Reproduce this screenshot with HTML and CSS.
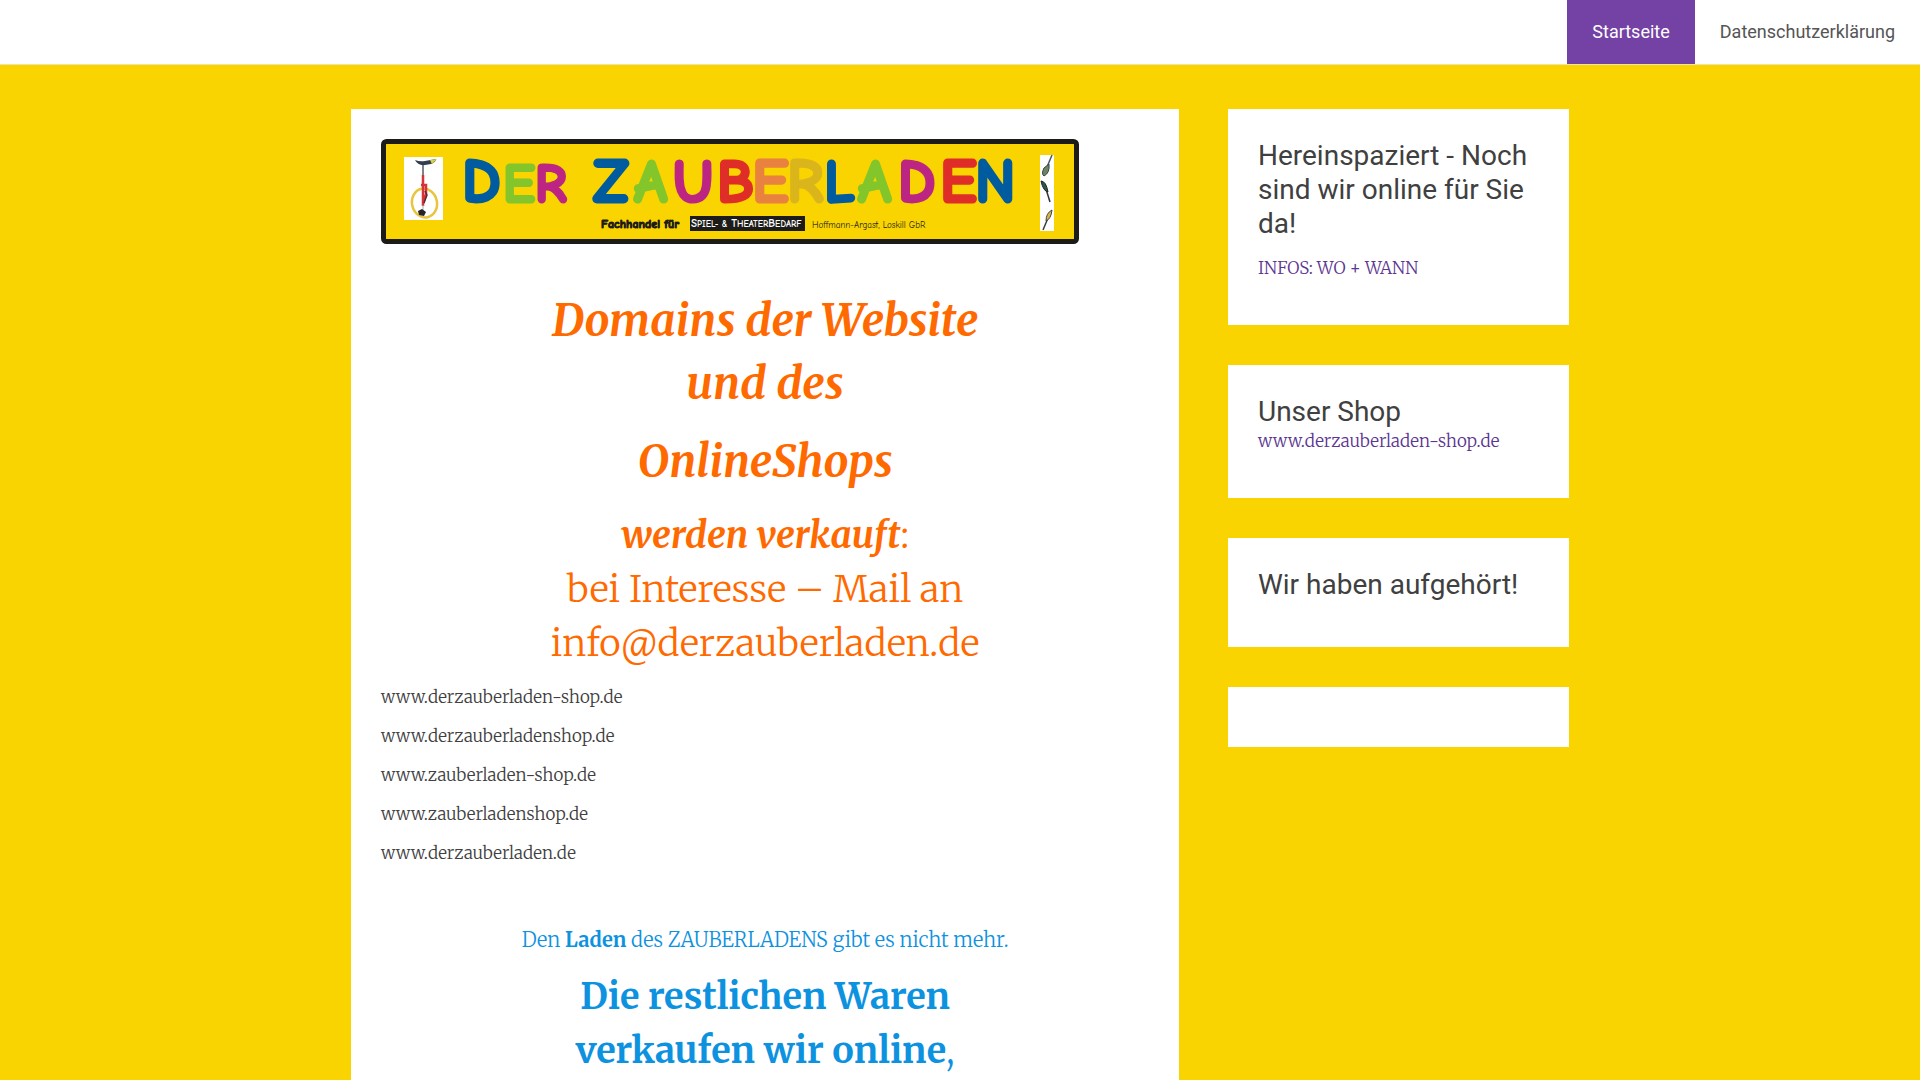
FILE: index.html
```html
<!DOCTYPE html>
<html lang="de">
<head>
    <meta charset="UTF-8">
    <meta name="viewport" content="width=device-width, initial-scale=1.0">
    <title>Der Zauberladen</title>
    <link rel="stylesheet" href="styles.css">
</head>
<body>

<header class="site-header">
    <nav class="main-nav">
        <a href="#" class="nav-link active">Startseite</a>
        <a href="#" class="nav-link">Datenschutzerklärung</a>
    </nav>
</header>

<div class="container">
    <main class="content">
        <svg class="banner" viewBox="0 0 698 105" role="img" aria-label="Der Zauberladen">
            <rect x="2.500" y="2.500" width="693" height="100" rx="3" fill="#fad400" stroke="#1d1b18" stroke-width="5"/>
            <!-- Einrad -->
            <rect x="23" y="18" width="39" height="63" fill="#fff"/>
            <ellipse cx="43.500" cy="64" rx="12.500" ry="14.500" fill="none" stroke="#e8c53a" stroke-width="2.500" transform="rotate(-12 43.500 64)"/>
            <path d="M34 21q5 2 10 1l11-2q0 3-5 5l-6 1q-7 1-10-5z" fill="#353c4c"/>
            <path d="M49 21l7-1-5 5z" fill="#d8d04a"/>
            <path d="M42 26v14" stroke="#555b66" stroke-width="1.500"/>
            <path d="M42 36v31M40 46h5v9l-3 10" fill="none" stroke="#d6323a" stroke-width="2.500"/>
            <path d="M44 52l2 4-3 8" fill="none" stroke="#5a2b35" stroke-width="1.500"/>
            <path d="M42 66v9" stroke="#a8b0b8" stroke-width="1"/>
            <path d="M37 72l4-2 4 3-2 4-5-1z" fill="#23252b"/>
            <!-- Schriftzug -->
            <g class="banner-title">
                <text class="letter-big"><tspan class="blue" x="81" y="63">D</tspan></text>
                <text class="letter-small"><tspan class="green" x="122" y="63">E</tspan><tspan class="pink" x="154" y="63">R</tspan></text>
                <text class="letter-big"><tspan class="blue" x="212" y="63">Z</tspan></text>
                <text class="letter-mid"><tspan class="green" x="253" y="63">A</tspan><tspan class="pink" x="292" y="63">U</tspan><tspan class="red" x="336" y="63">B</tspan></text>
                <text class="letter-big"><tspan class="orange" x="371" y="63">E</tspan><tspan class="gold" x="406" y="63">R</tspan></text>
                <text class="letter-mid"><tspan class="blue" x="443" y="63">L</tspan><tspan class="green" x="477" y="63">A</tspan><tspan class="pink" x="517" y="63">D</tspan></text>
                <text class="letter-big"><tspan class="red" x="559" y="63">E</tspan><tspan class="blue" x="594" y="63">N</tspan></text>
            </g>
            <text class="banner-trade" x="220" y="89">Fachhandel für</text>
            <rect x="309" y="77" width="115" height="15" fill="#1d1b18"/>
            <text class="banner-label" x="310" y="88">S<tspan class="caps">PIEL- &amp;</tspan> T<tspan class="caps">HEATER</tspan>B<tspan class="caps">EDARF</tspan></text>
            <text class="banner-owner" x="431" y="89">Hoffmann-Argast, Loskill GbR</text>
            <!-- Keulen -->
            <rect x="659" y="16" width="14" height="76" fill="#fff"/>
            <path d="M671 16l-5 12" stroke="#4a5563" stroke-width="1.500"/>
            <path d="M668 25q1 9-5 12-3-2 0-8z" fill="#6d8565" stroke="#3a4640" stroke-width="1"/>
            <path d="M669 63l-4-13" stroke="#33333b" stroke-width="1.500"/>
            <path d="M660 42q5 0 7 11-5-1-7-11z" fill="#285b48" stroke="#222" stroke-width="1"/>
            <path d="M662 91l5-12" stroke="#3c3a40" stroke-width="1.500"/>
            <path d="M671 71q-6 3-6 11 5-2 6-11z" fill="#d9b64a" stroke="#444" stroke-width="1"/>
        </svg>

        <div class="sale-notice">
            <p class="text-xl"><strong><em>Domains der Website<br>und des</em></strong></p>
            <p class="text-xl"><strong><em>OnlineShops</em></strong></p>
            <p class="text-lg"><strong><em>werden verkauft</em></strong>:<br>bei Interesse – Mail an<br>info@derzauberladen.de</p>
        </div>

        <div class="domains">
            <p>www.derzauberladen-shop.de</p>
            <p>www.derzauberladenshop.de</p>
            <p>www.zauberladen-shop.de</p>
            <p>www.zauberladenshop.de</p>
            <p>www.derzauberladen.de</p>
        </div>

        <div class="shop-notice">
            <p class="text-md">Den <strong>Laden</strong> des ZAUBERLADENS gibt es nicht mehr.</p>
            <p class="text-lg"><strong>Die restlichen Waren<br>verkaufen wir online</strong>,</p>
        </div>
    </main>

    <aside class="sidebar">
        <section class="widget">
            <h2 class="spaced">Hereinspaziert - Noch sind wir online für Sie da!</h2>
            <p><a href="#">INFOS: WO + WANN</a></p>
        </section>
        <section class="widget">
            <h2>Unser Shop</h2>
            <p><a href="#">www.derzauberladen-shop.de</a></p>
        </section>
        <section class="widget">
            <h2 class="spaced">Wir haben aufgehört!</h2>
        </section>
        <section class="widget"></section>
    </aside>
</div>

</body>
</html>
```
FILE: styles.css
```css
* {
    box-sizing: border-box;
}
body {
    margin: 0;
    background-color: #fad400;
    color: #404040;
    font-family: Merriweather, "DejaVu Serif Condensed", "DejaVu Serif", serif;
    font-size: 17px;
    font-weight: 300;
    line-height: 24px;
}
p {
    margin: 0 0 15px;
}
a {
    color: #5c3590;
    text-decoration: none;
}
strong {
    font-weight: 700;
}
.site-header {
    background-color: #fff;
    border-bottom: 1px solid #f3e3a0;
}
.main-nav {
    display: flex;
    justify-content: flex-end;
}
.nav-link {
    padding: 0 25px;
    color: #555;
    font-family: Roboto, sans-serif;
    font-size: 18px;
    font-weight: 400;
    line-height: 64px;
}
.nav-link.active {
    background-color: #7441a4;
    color: #fff;
}
.container {
    display: flex;
    justify-content: space-between;
    align-items: flex-start;
    max-width: 1218px;
    margin: 44px auto 0;
}
.content {
    width: 68%;
    padding: 30px;
    background-color: #fff;
}
.sidebar {
    width: 28%;
}

/* Banner */
.banner {
    display: block;
    width: 100%;
    max-width: 698px;
    margin-bottom: 45px;
    font-family: "Comic Sans MS", "Comic Neue", "Comic Relief", "Open Sans", sans-serif;
}
.banner-title {
    font-weight: 700;
    stroke-width: 3px;
    stroke-linejoin: round;
}
.letter-big {
    font-size: 62px;
}
.letter-mid {
    font-size: 60px;
}
.letter-small {
    font-size: 54px;
}
.blue {
    fill: #005b9f;
    stroke: #005b9f;
}
.green {
    fill: #83c62b;
    stroke: #83c62b;
}
.pink {
    fill: #bd2583;
    stroke: #bd2583;
}
.red {
    fill: #df2d27;
    stroke: #df2d27;
}
.orange {
    fill: #e9823f;
    stroke: #e9823f;
}
.gold {
    fill: #dab51b;
    stroke: #dab51b;
}
.banner-trade {
    font-size: 12px;
    font-weight: 700;
    fill: #1d1b18;
    stroke: #1d1b18;
    stroke-width: 1px;
}
.banner-label {
    font-size: 11px;
    font-weight: 700;
    fill: #fff;
}
.banner-label .caps {
    font-size: 9px;
}
.banner-owner {
    font-size: 9px;
    font-weight: 400;
    fill: #1d1b18;
}

/* Text */
.text-xl {
    font-size: 44px;
    line-height: 63px;
}
.text-lg {
    font-size: 37px;
    line-height: 54px;
}
.text-md {
    font-size: 20px;
    line-height: 30px;
}
.sale-notice {
    color: #ff6a00;
    text-align: center;
}
.shop-notice {
    margin-top: 60px;
    color: #0d92e0;
    text-align: center;
}
.shop-notice .text-lg {
    font-size: 36px;
}

/* Sidebar */
.widget {
    margin-bottom: 40px;
    padding: 30px;
    background-color: #fff;
}
.widget h2 {
    margin: 0;
    font-family: Roboto, sans-serif;
    font-size: 28px;
    font-weight: 400;
    line-height: 34px;
}
.widget h2.spaced {
    margin-bottom: 15px;
}
```
